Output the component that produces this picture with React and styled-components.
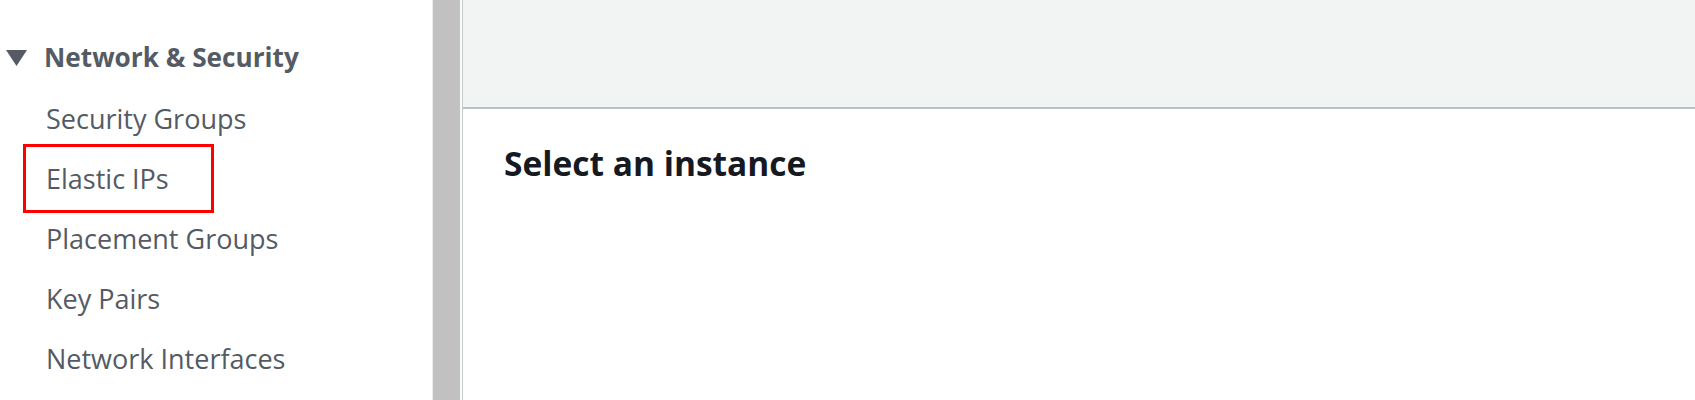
import React from "react";
import styled, { createGlobalStyle } from "styled-components";

const Global = createGlobalStyle`
  html, body { margin: 0; padding: 0; background: #fff; }
  body { font-family: "Open Sans", "Noto Sans", sans-serif; }
`;

const Page = styled.div`
  display: flex;
  width: 1695px;
  height: 400px;
  overflow: hidden;
`;

const Sidebar = styled.nav`
  width: 432px;
  flex: none;
  background: #fff;
  padding-top: 37px;
  box-sizing: border-box;
`;

const SectionHeader = styled.div`
  display: flex;
  align-items: center;
  gap: 17px;
  padding-left: 6px;
  height: 40px;
  color: #545b64;
  font-weight: 700;
  font-size: 26.2px;
`;

const Caret = styled.svg`
  width: 21px;
  height: 16px;
  flex: none;
  margin-top: 2px;
`;

const List = styled.ul`
  list-style: none;
  margin: 11px 0 0;
  padding: 0;
`;

const Item = styled.li`
  height: 60px;
  display: flex;
  align-items: center;
`;

const ItemLabel = styled.span`
  font-size: 27px;
  color: #545b64;
  padding: 0 0 0 ${(p) => (p.$highlight ? "20px" : "46px")};
  ${(p) =>
    p.$highlight &&
    `
    margin-left: 23px;
    border: 3px solid #ff0000;
    width: 191px;
    height: 69px;
    box-sizing: border-box;
    display: flex;
    align-items: center;
    flex: none;
  `}
`;

const Scrollbar = styled.div`
  width: 31px;
  flex: none;
  background: #fafafa;
  border-left: 1px solid #ececec;
  border-right: 1px solid #c6cccc;
  box-sizing: border-box;
  display: flex;
  padding-right: 2px;
`;

const Thumb = styled.div`
  width: 27px;
  background: #c1c1c1;
`;

const Main = styled.main`
  flex: 1;
  display: flex;
  flex-direction: column;
`;

const TopBar = styled.div`
  height: 107px;
  background: #f2f3f3;
  border-bottom: 2px solid #b9c2c3;
`;

const Content = styled.section`
  padding: 31px 0 0 41px;
`;

const Title = styled.h2`
  margin: 0;
  font-size: 33.5px;
  font-weight: 700;
  color: #16191f;
`;

const items = [
  "Security Groups",
  "Elastic IPs",
  "Placement Groups",
  "Key Pairs",
  "Network Interfaces",
];

export default function App() {
  return (
    <>
      <Global />
      <Page>
        <Sidebar>
          <SectionHeader>
            <Caret viewBox="0 0 21 16">
              <path d="M0 0 H21 L10.5 16 Z" fill="#545b64" />
            </Caret>
            Network &amp; Security
          </SectionHeader>
          <List>
            {items.map((t) => (
              <Item key={t}>
                <ItemLabel $highlight={t === "Elastic IPs"}>{t}</ItemLabel>
              </Item>
            ))}
          </List>
        </Sidebar>
        <Scrollbar>
          <Thumb />
        </Scrollbar>
        <Main>
          <TopBar />
          <Content>
            <Title>Select an instance</Title>
          </Content>
        </Main>
      </Page>
    </>
  );
}
